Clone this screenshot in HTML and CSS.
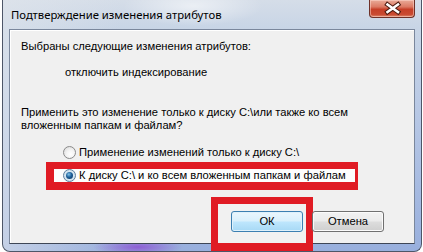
FILE: index.html
```html
<!DOCTYPE html>
<html lang="ru">
<head>
<meta charset="utf-8">
<title>Подтверждение изменения атрибутов</title>
<link rel="stylesheet" href="styles.css">
</head>
<body>
<div class="window">
  <div class="titlebar">
    <span class="title">Подтверждение изменения атрибутов</span>
    <span class="close">
      <svg width="46" height="18" viewBox="0 0 46 18">
        <path d="M18.5 4.5 L29 12 M29 4.5 L18.5 12" stroke="#4a1a10" stroke-width="4.6" stroke-linecap="square" fill="none"/>
        <path d="M18.5 4.5 L29 12 M29 4.5 L18.5 12" stroke="#ffffff" stroke-width="2.6" stroke-linecap="square" fill="none"/>
      </svg>
    </span>
  </div>
  <div class="client">
    <p class="line l1">Выбраны следующие изменения атрибутов:</p>
    <p class="line change">отключить индексирование</p>
    <p class="line question">Применить это изменение только к диску C:\или также ко всем<br>вложенным папкам и файлам?</p>
    <div class="options">
      <div class="option"><span class="radio"></span><span>Применение изменений только к диску C:\</span></div>
      <div class="option"><span class="radio checked"><span class="dot"></span></span><span>К диску C:\ и ко всем вложенным папкам и файлам</span></div>
    </div>
    <div class="buttons">
      <span class="btn default">ОК</span>
      <span class="btn">Отмена</span>
    </div>
  </div>
  <div class="mark mark-option"></div>
  <div class="mark mark-ok"></div>
</div>
</body>
</html>
```
FILE: styles.css
```css
html, body {
  margin: 0;
  padding: 0;
}
body {
  width: 423px;
  height: 252px;
  overflow: hidden;
  background: #ffffff;
  font-family: "Liberation Sans", Arial, sans-serif;
  font-size: 11.2px;
  color: #000;
}
.window {
  position: relative;
  box-sizing: border-box;
  margin-left: 2px;
  width: 420px;
  height: 252px;
  border: 1px solid #4d5668;
  border-top: none;
  border-radius: 0 0 8px 8px;
  background:
    radial-gradient(ellipse 45px 9px at 135px 247px, rgba(140, 80, 210, 0.85), rgba(140, 80, 210, 0) 100%),
    radial-gradient(ellipse 70px 20px at 190px 6px, rgba(255, 255, 255, 0.55), rgba(255, 255, 255, 0) 100%),
    linear-gradient(to right, rgba(225, 230, 236, 0.6) 0, rgba(225, 230, 236, 0) 120px),
    linear-gradient(to bottom, #d5dde8 0, #c8d5e6 28px, #b6c7e5 120px, #98afdd 100%);
}
.titlebar {
  display: flex;
  justify-content: space-between;
  align-items: flex-start;
  height: 29px;
  padding-left: 8px;
  padding-right: 6px;
}
.title {
  font-family: "Noto Sans", sans-serif;
  font-size: 11.3px;
  line-height: 29px;
  color: #000;
}
.close {
  display: block;
  width: 46px;
  height: 18px;
  box-sizing: border-box;
  border: 1px solid #6e3128;
  border-top: none;
  border-radius: 0 0 4px 4px;
  background: linear-gradient(to bottom, #e9ab98 0, #dc7a64 40%, #c63f27 55%, #c94a31 85%, #df8b70 100%);
  box-shadow: inset 0 0 0 1px rgba(255, 220, 210, 0.5);
}
.close svg {
  display: block;
  margin: 0 0 0 -1px;
}
.client {
  box-sizing: border-box;
  margin-left: 6px;
  width: 406px;
  height: 215px;
  border: 1px solid #7a879c;
  border-bottom-color: #3e4656;
  background: #f0f0f0;
  box-shadow: inset 1px 1px 0 #ffffff;
  padding: 10px 30px 0 11px;
}
.line {
  margin: 0;
  line-height: 13px;
  white-space: nowrap;
}
.change {
  margin-top: 13px;
  padding-left: 44px;
}
.question {
  margin-top: 27px;
}
.options {
  margin-top: 14px;
  padding-left: 42px;
  display: flex;
  flex-direction: column;
  gap: 10px;
}
.option {
  position: relative;
  z-index: 1;
  display: flex;
  align-items: center;
  height: 13px;
  line-height: 13px;
  white-space: nowrap;
}
.radio {
  box-sizing: border-box;
  width: 13px;
  height: 13px;
  border-radius: 50%;
  border: 1px solid #8a8a8a;
  background: radial-gradient(circle at 60% 65%, #ffffff 0, #f4f4f4 40%, #d6d6d6 100%);
  margin-right: 3px;
  display: flex;
  align-items: center;
  justify-content: center;
}
.radio.checked {
  border-color: #5c7e9e;
  background: radial-gradient(circle at 50% 50%, #e8f2f9 0, #c6dbea 100%);
}
.dot {
  width: 7px;
  height: 7px;
  border-radius: 50%;
  background: radial-gradient(circle at 40% 35%, #7fc3ec 0, #1e5f98 45%, #0a2f5c 100%);
}
.buttons {
  display: flex;
  justify-content: flex-end;
  gap: 9px;
  margin-top: 29px;
}
.btn {
  box-sizing: border-box;
  width: 72px;
  height: 21px;
  border: 1px solid #707070;
  border-radius: 3px;
  background: linear-gradient(to bottom, #f2f2f2 0, #ebebeb 48%, #dddddd 52%, #cfcfcf 100%);
  box-shadow: inset 0 0 0 1px #fbfbfb;
  display: flex;
  align-items: center;
  justify-content: center;
  line-height: 13px;
  position: relative;
  z-index: 1;
}
.btn.default {
  border-color: #3c7fb1;
  background: linear-gradient(to bottom, #eaf6fd 0, #d9f0fc 48%, #bee6fd 52%, #a7d9f5 100%);
  box-shadow: inset 0 0 0 1px #dff1fb;
}
.mark {
  position: absolute;
  box-sizing: border-box;
  border-style: solid;
  border-color: #e01b24;
}
.mark-option {
  left: 43px;
  top: 162px;
  width: 312px;
  height: 28px;
  border-width: 7px 3px 8px 8px;
  background: #fdfdfd;
}
.mark-ok {
  left: 208px;
  top: 197px;
  width: 102px;
  height: 54px;
  border-width: 7px 7px 8px 7px;
  background: rgba(245, 245, 245, 0.3);
}
```
